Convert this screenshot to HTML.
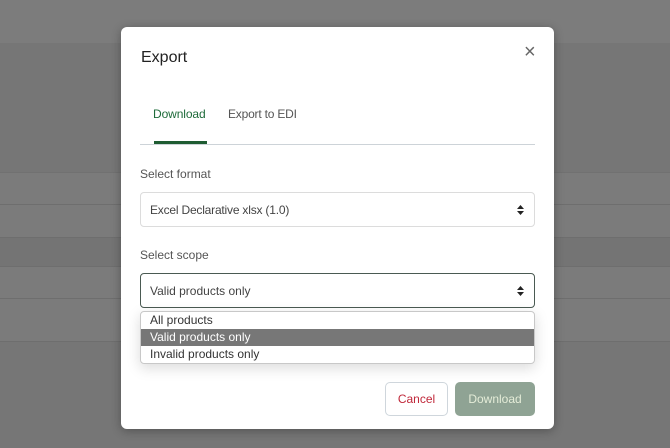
<!DOCTYPE html>
<html><head><style>
*{box-sizing:border-box;margin:0;padding:0}
body{width:670px;height:448px;overflow:hidden;background:#767676;font-family:"Liberation Sans",sans-serif;position:relative}
.b{position:absolute;left:0;width:670px}
.m{position:absolute;left:121px;top:27px;width:433px;height:402px;background:#fff;border-radius:6px;box-shadow:0 2px 10px rgba(0,0,0,.3)}
.a{position:absolute}
.sel{position:absolute;left:19px;width:395px;height:35px;border:1px solid #dcdcdc;border-radius:4px;font-size:12px;color:#444;padding:10px 9px}
.arr{position:absolute;right:10px;top:11px;width:7px;height:12px}
</style></head><body>
<div class="b" style="top:0;height:43px;background:#7c7c7c"></div>
<div class="b" style="top:172px;height:65px;background:#7b7b7b;border-top:1px solid #717171"></div>
<div class="b" style="top:204px;height:1px;background:#6e6e6e"></div>
<div class="b" style="top:237px;height:30px;background:#747474;border-top:1px solid #6e6e6e"></div>
<div class="b" style="top:266px;height:76px;background:#7b7b7b;border-top:1px solid #6e6e6e"></div>
<div class="b" style="top:298px;height:1px;background:#6e6e6e"></div>
<div class="b" style="top:341px;height:1px;background:#6e6e6e"></div>
<div class="m">
<div class="a" style="left:20px;top:22px;font-size:16px;color:#222">Export</div>
<div class="a" style="left:403px;top:14px;font-size:20px;color:#666">×</div>
<div class="a" style="left:32px;top:80px;font-size:12px;color:#1e6b3a;letter-spacing:-.1px">Download</div>
<div class="a" style="left:107px;top:80px;font-size:12px;color:#555;letter-spacing:-.2px">Export to EDI</div>
<div class="a" style="left:33px;top:114px;width:53px;height:3px;background:#1e5c32"></div>
<div class="a" style="left:19px;top:117px;width:395px;height:1px;background:#cdd3d8"></div>
<div class="a" style="left:19px;top:140px;font-size:12px;color:#555">Select format</div>
<div class="sel" style="top:165px;letter-spacing:-.2px">Excel Declarative xlsx (1.0)<svg class="arr" viewBox="0 0 7 12"><path d="M0 5L3.5 1 7 5ZM0 7L3.5 11 7 7Z" fill="#222"/></svg></div>
<div class="a" style="left:19px;top:221px;font-size:12px;color:#555">Select scope</div>
<div class="sel" style="top:246px;border-color:#4a5a52">Valid products only<svg class="arr" viewBox="0 0 7 12"><path d="M0 5L3.5 1 7 5ZM0 7L3.5 11 7 7Z" fill="#222"/></svg></div>
<div class="a" style="left:19px;top:284px;width:395px;height:53px;border:1px solid #c8c8c8;border-radius:4px;font-size:12px;color:#333;overflow:hidden;box-shadow:0 4px 14px rgba(0,0,0,.15)">
<div style="height:17px;padding:1px 9px">All products</div>
<div style="height:17px;padding:1px 9px;background:#777;color:#fff">Valid products only</div>
<div style="height:17px;padding:1px 9px">Invalid products only</div>
</div>
<div class="a" style="left:264px;top:355px;width:63px;height:34px;border:1px solid #cfd6dc;border-radius:5px;color:#c0283a;font-size:12px;text-align:center;line-height:32px">Cancel</div>
<div class="a" style="left:334px;top:355px;width:80px;height:34px;background:#8fa394;border-radius:5px;color:#e4ecd8;font-size:12px;text-align:center;line-height:34px">Download</div>
</div>
</body></html>
